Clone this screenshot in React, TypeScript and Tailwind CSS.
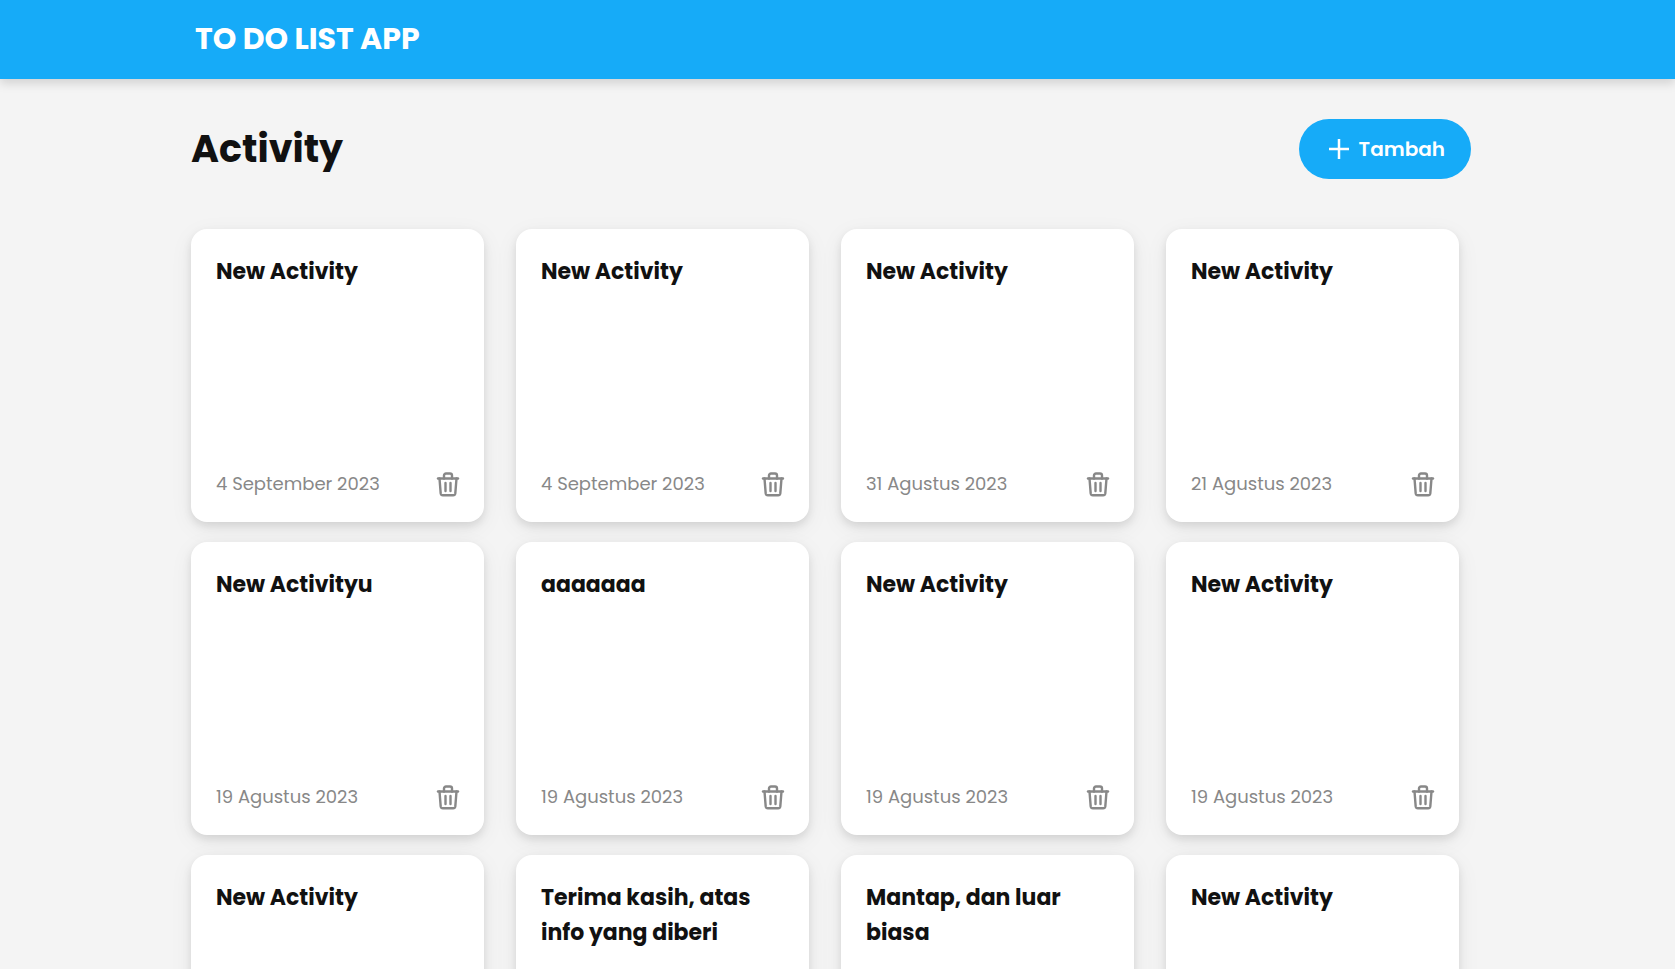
import { useState } from 'react';

type Activity = {
  id: number;
  title: string;
  date: string;
};

const initialActivities: Activity[] = [
  { id: 1, title: 'New Activity', date: '4 September 2023' },
  { id: 2, title: 'New Activity', date: '4 September 2023' },
  { id: 3, title: 'New Activity', date: '31 Agustus 2023' },
  { id: 4, title: 'New Activity', date: '21 Agustus 2023' },
  { id: 5, title: 'New Activityu', date: '19 Agustus 2023' },
  { id: 6, title: 'aaaaaaa', date: '19 Agustus 2023' },
  { id: 7, title: 'New Activity', date: '19 Agustus 2023' },
  { id: 8, title: 'New Activity', date: '19 Agustus 2023' },
  { id: 9, title: 'New Activity', date: '19 Agustus 2023' },
  { id: 10, title: 'Terima kasih, atas info yang diberi', date: '19 Agustus 2023' },
  { id: 11, title: 'Mantap, dan luar biasa', date: '19 Agustus 2023' },
  { id: 12, title: 'New Activity', date: '19 Agustus 2023' },
];

function TrashIcon() {
  return (
    <svg
      width="24"
      height="26"
      viewBox="0 0 24 26"
      fill="none"
      stroke="#888888"
      strokeWidth="2.4"
      strokeLinecap="round"
      strokeLinejoin="round"
    >
      <path d="M2 7.5h20" />
      <path d="M3.5 7.5l1.2 14.9a2.2 2.2 0 0 0 2.2 1.9h10.2a2.2 2.2 0 0 0 2.2-1.9L20.5 7.5" />
      <path d="M8 7.5V4.500a2 2 0 0 1 2-2h4a2 2 0 0 1 2 2v3" />
      <path d="M9.5 12v8M14.5 12v8" />
    </svg>
  );
}

function ActivityCard({ activity, onDelete }: { activity: Activity; onDelete: (id: number) => void }) {
  return (
    <article className="flex aspect-square flex-col justify-between rounded-2xl bg-white pt-[25px] pr-6 pb-6 pl-[25px] shadow-[0_4px_8px_rgba(0,0,0,0.1),0_6px_24px_rgba(0,0,0,0.06)]">
      <h2 className="text-[22px] leading-[35px] font-bold text-[#111111]">{activity.title}</h2>
      <div className="flex items-center justify-between">
        <span className="text-lg text-[#888888]">{activity.date}</span>
        <button type="button" aria-label="Hapus" onClick={() => onDelete(activity.id)} className="cursor-pointer">
          <TrashIcon />
        </button>
      </div>
    </article>
  );
}

export default function App() {
  const [activities, setActivities] = useState(initialActivities);

  const handleAdd = () => {
    setActivities([{ id: Date.now(), title: 'New Activity', date: '4 September 2023' }, ...activities]);
  };

  const handleDelete = (id: number) => {
    setActivities(activities.filter((item) => item.id !== id));
  };

  return (
    <div className="min-h-screen bg-[#f4f4f4] font-[Poppins,Inter,sans-serif]">
      <header className="bg-[#16abf8] pr-[13px] shadow-[0_4px_10px_rgba(0,0,0,0.15)]">
        <div className="mx-auto max-w-[1280px] px-1 pt-[21px] pb-[22px]">
          <h1 className="text-3xl font-bold text-white">TO DO LIST APP</h1>
        </div>
      </header>

      <main className="pr-[13px]">
        <div className="mx-auto max-w-[1280px]">
          <div className="flex items-center justify-between pt-10 pb-[50px]">
            <h2 className="text-[38px] leading-15 font-bold text-[#111111]">Activity</h2>
            <button
              type="button"
              onClick={handleAdd}
              className="flex h-15 cursor-pointer items-center gap-2 rounded-full bg-[#16abf8] pr-[26px] pl-7 text-xl font-semibold text-white"
            >
              <svg width="24" height="24" viewBox="0 0 24 24" fill="none" stroke="currentColor" strokeWidth="2.5">
                <path d="M12 2v20M2 12h20" />
              </svg>
              Tambah
            </button>
          </div>

          <div className="grid grid-cols-4 gap-x-8 gap-y-5 pr-3">
            {activities.map((item) => (
              <ActivityCard key={item.id} activity={item} onDelete={handleDelete} />
            ))}
          </div>
        </div>
      </main>
    </div>
  );
}
